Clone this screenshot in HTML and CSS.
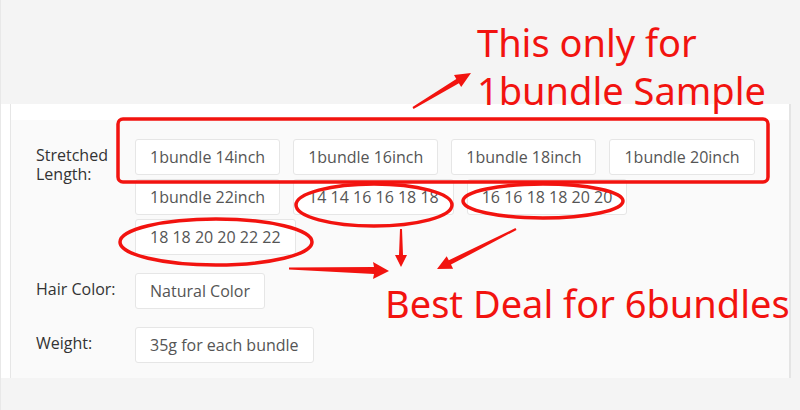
FILE: index.html
```html
<!DOCTYPE html>
<html lang="en">
<head>
  <meta charset="UTF-8">
  <title>Product options</title>
  <meta name="viewport" content="width=device-width, initial-scale=1.0">
  <link rel="stylesheet" href="styles.css">
</head>
<body>
  <div class="page">
    <div class="panel">
      <div class="panel-body">
        <div class="sheet">
          <div class="spec-row">
            <div class="spec-label">Stretched<br>Length:</div>
            <div class="options">
              <span class="opt">1bundle 14inch</span>
              <span class="opt">1bundle 16inch</span>
              <span class="opt">1bundle 18inch</span>
              <span class="opt">1bundle 20inch</span>
              <span class="opt">1bundle 22inch</span>
              <span class="opt">14 14 16 16 18 18</span>
              <span class="opt">16 16 18 18 20 20</span>
              <span class="opt">18 18 20 20 22 22</span>
            </div>
          </div>
          <div class="spec-row">
            <div class="spec-label">Hair Color:</div>
            <div class="options">
              <span class="opt">Natural Color</span>
            </div>
          </div>
          <div class="spec-row">
            <div class="spec-label">Weight:</div>
            <div class="options">
              <span class="opt">35g for each bundle</span>
            </div>
          </div>
        </div>
      </div>
    </div>
  </div>

  <!-- red marker notes drawn on top -->
  <svg class="marks" viewBox="0 0 800 410" width="800" height="410">
    <g fill="none" stroke="#f2130f" stroke-width="3.5">
      <rect x="118" y="119" width="650" height="63" rx="5"/>
      <ellipse cx="216" cy="242" rx="96" ry="23"/>
      <ellipse cx="374" cy="205" rx="78" ry="21"/>
      <ellipse cx="543" cy="201" rx="80" ry="17"/>
    </g>
    <g fill="#f2130f">
      <!-- tapered arrow up to the top note -->
      <polygon points="412.5,107.1 456.3,79 454,75.1 471,73 461.2,87.1 458.9,83.2 413.5,108.9"/>
      <!-- arrows down to the bottom note -->
      <polygon points="400,229 399,255 395,255 401,267 407,255 403,255 402,229"/>
      <polygon points="515.5,228.1 448.8,260.2 446.7,256.2 437,269 453.1,268.7 451,264.6 516.5,229.9"/>
      <polygon points="289,267.5 374,267 373,262 389,271 373,279 374,274 289,269.5"/>
    </g>
  </svg>
  <div class="note note-top">This only for<br>1bundle Sample</div>
  <div class="note note-bottom">Best Deal for 6bundles</div>
</body>
</html>
```

FILE: styles.css
```css
body {
  margin: 0;
  background: #f4f4f4;
  font-family: "Open Sans", "Noto Sans", sans-serif;
}
.page {
  border-left: 1px solid #e8e8e8;
  min-height: 410px;
  padding-top: 104px;
  box-sizing: border-box;
}
.panel {
  background: #fff;
  margin-right: 9px;
  padding-left: 9px;
  border-right: 2px solid #e4e4e4;
}
.panel-body {
  border-left: 1px solid #e6e6e6;
  padding-top: 16px;
}
.sheet {
  background: #fafafa;
  padding: 19px 0 15px;
}
.spec-row {
  display: flex;
  margin-bottom: 18px;
}
.spec-row:last-child {
  margin-bottom: 0;
}
.spec-label {
  width: 99px;
  flex: none;
  padding: 7px 0 0 25px;
  font-size: 16px;
  line-height: 19px;
  color: #333;
}
.options {
  display: flex;
  flex-wrap: wrap;
  gap: 4px 13px;
  width: 640px;
}
.opt {
  display: block;
  height: 34px;
  line-height: 34px;
  padding: 0 14px;
  background: #fff;
  border: 1px solid #e6e6e6;
  border-radius: 3px;
  font-size: 16px;
  color: #555;
  white-space: nowrap;
}
.marks {
  position: absolute;
  left: 0;
  top: 0;
}
.note {
  position: absolute;
  font-family: "Noto Sans", "Open Sans", sans-serif;
  font-size: 38px;
  line-height: 48px;
  color: #f2130f;
  white-space: nowrap;
}
.note-top {
  left: 477px;
  top: 18px;
}
.note-bottom {
  left: 385px;
  top: 279px;
}
```
